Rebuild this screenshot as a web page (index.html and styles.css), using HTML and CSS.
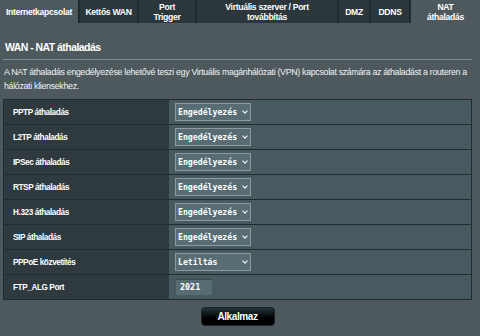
FILE: index.html
```html
<!DOCTYPE html>
<html lang="hu">
<head>
    <meta charset="UTF-8">
    <meta name="viewport" content="width=device-width, initial-scale=1.0">
    <title>WAN - NAT áthaladás</title>
    <link rel="stylesheet" href="styles.css">
</head>
<body>
    <div class="tabs">
        <div class="tab active" style="width: 78px">Internetkapcsolat</div>
        <div class="tab" style="width: 57px">Kettős WAN</div>
        <div class="tab" style="width: 56px">Port<br>Trigger</div>
        <div class="tab" style="width: 140px">Virtuális szerver / Port<br>továbbítás</div>
        <div class="tab" style="width: 30px">DMZ</div>
        <div class="tab" style="width: 38px">DDNS</div>
        <div class="tab current">NAT<br>áthaladás</div>
    </div>

    <div class="content">
        <div class="title">WAN - NAT áthaladás</div>
        <div class="line"></div>
        <div class="desc">A NAT áthaladás engedélyezése lehetővé teszi egy Virtuális magánhálózati (VPN) kapcsolat számára az áthaladást a routeren a hálózati kliensekhez.</div>

        <table class="form">
            <tr>
                <th>PPTP áthaladás</th>
                <td><div class="select">Engedélyezés<span class="arrow"></span></div></td>
            </tr>
            <tr>
                <th>L2TP áthaladás</th>
                <td><div class="select">Engedélyezés<span class="arrow"></span></div></td>
            </tr>
            <tr>
                <th>IPSec áthaladás</th>
                <td><div class="select">Engedélyezés<span class="arrow"></span></div></td>
            </tr>
            <tr>
                <th>RTSP áthaladás</th>
                <td><div class="select">Engedélyezés<span class="arrow"></span></div></td>
            </tr>
            <tr>
                <th>H.323 áthaladás</th>
                <td><div class="select">Engedélyezés<span class="arrow"></span></div></td>
            </tr>
            <tr>
                <th>SIP áthaladás</th>
                <td><div class="select">Engedélyezés<span class="arrow"></span></div></td>
            </tr>
            <tr>
                <th>PPPoE közvetítés</th>
                <td><div class="select">Letiltás<span class="arrow"></span></div></td>
            </tr>
            <tr>
                <th>FTP_ALG Port</th>
                <td><div class="port">2021</div></td>
            </tr>
        </table>

        <div class="apply">
            <button class="button">Alkalmaz</button>
        </div>
    </div>
</body>
</html>
```

FILE: styles.css
```css
body {
    margin: 0;
    background: #4d595d;
    font-family: 'Liberation Sans', Arial, sans-serif;
    color: #fff;
}

.tabs {
    display: flex;
    gap: 2px;
    height: 23px;
    background: #1f2a2e;
}

.tab {
    flex-shrink: 0;
    display: flex;
    align-items: center;
    justify-content: center;
    text-align: center;
    background: #2b373b;
    color: #fff;
    font-size: 8.6px;
    font-weight: bold;
    letter-spacing: -0.3px;
    line-height: 10px;
}

.tab.active,
.tab.current {
    background: #4d595d;
}

.tab.current {
    flex: 1;
}

.content {
    padding: 0 8px 0 3px;
}

.title {
    padding: 17px 0 0 2px;
    font-size: 10.5px;
    font-weight: bold;
    letter-spacing: -0.55px;
    line-height: 14px;
}

.line {
    height: 1px;
    margin: 5px 0 0 0;
    background: #7b8a8f;
}

.desc {
    padding: 5px 0 0 1px;
    font-size: 8.8px;
    letter-spacing: -0.3px;
    line-height: 14px;
    color: #f2f4f5;
}

.form {
    width: 100%;
    margin-top: 6px;
    border-collapse: collapse;
    border: 1px solid #222b2e;
}

.form th,
.form td {
    height: 24px;
    padding: 0;
    border-bottom: 1px solid #222b2e;
}

.form th {
    width: 156px;
    padding-left: 9px;
    background: #2f3a3e;
    text-align: left;
    font-size: 8.2px;
    font-weight: bold;
    letter-spacing: -0.4px;
    color: #fff;
}

.form td {
    padding-left: 6px;
    background: #475a5f;
}

.select {
    position: relative;
    width: 72px;
    height: 16px;
    padding-left: 2px;
    background: #576d73;
    border: 1px solid #8e9a9e;
    font-family: 'DejaVu Sans Mono', monospace;
    font-size: 8.2px;
    font-weight: bold;
    line-height: 16px;
    color: #fff;
}

.arrow {
    position: absolute;
    right: 3px;
    top: 5px;
    width: 3px;
    height: 3px;
    border-right: 1.5px solid #fff;
    border-bottom: 1.5px solid #fff;
    transform: rotate(45deg);
}

.port {
    width: 32px;
    height: 15px;
    margin-left: 1px;
    padding-left: 4px;
    background: #576d73;
    border-top: 1px solid #3a4a4f;
    font-family: 'DejaVu Sans Mono', monospace;
    font-size: 8.4px;
    font-weight: bold;
    line-height: 15px;
}

.apply {
    display: flex;
    justify-content: center;
    padding-top: 7px;
}

.button {
    width: 74px;
    height: 19px;
    border: 1px solid #1a2225;
    border-radius: 4px;
    background: linear-gradient(#233438, #000 60%);
    color: #fff;
    font-family: 'Liberation Sans', Arial, sans-serif;
    font-size: 10px;
    font-weight: bold;
    letter-spacing: -0.4px;
    cursor: pointer;
}
```
